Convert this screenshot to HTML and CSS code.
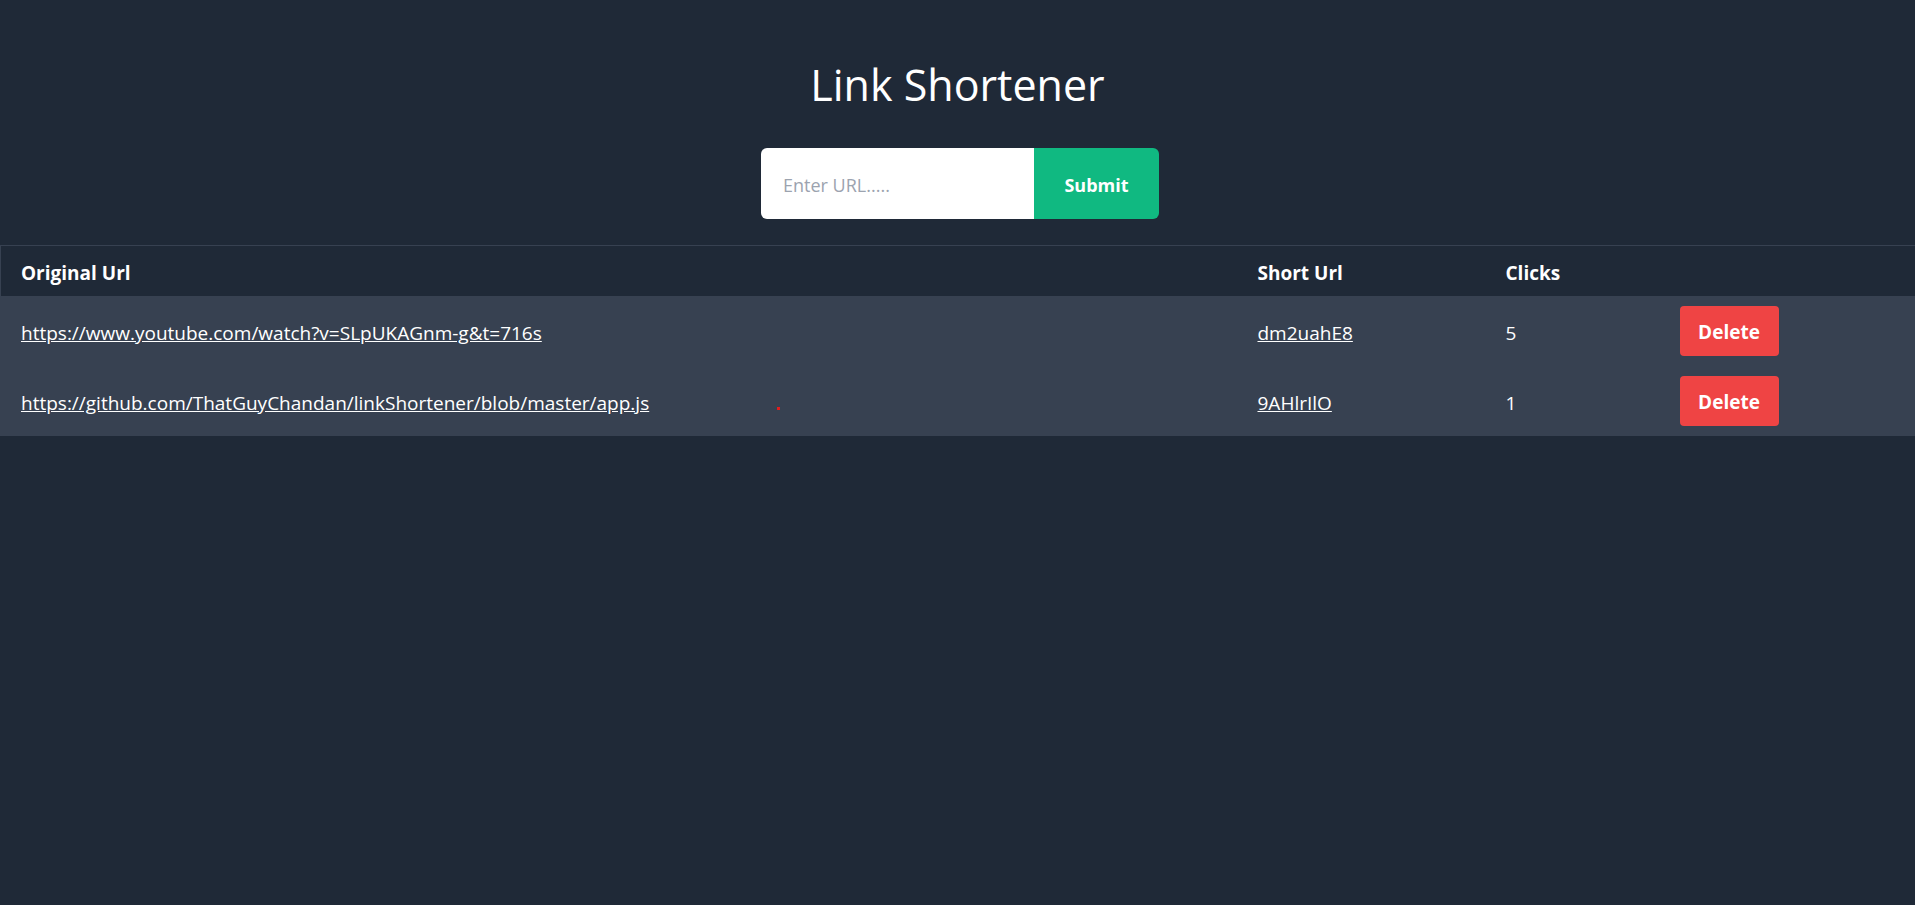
FILE: index.html
```html
<!DOCTYPE html>
<html lang="en">
<head>
<meta charset="utf-8">
<title>Link Shortener</title>
<link rel="stylesheet" href="styles.css">
</head>
<body>
<h1 class="title">Link Shortener</h1>
<form class="form">
  <input class="url-input" type="text" placeholder="Enter URL.....">
  <button class="submit" type="button">Submit</button>
</form>
<table class="links">
  <colgroup>
    <col class="col-orig">
    <col class="col-short">
    <col class="col-clicks">
    <col class="col-act">
  </colgroup>
  <thead>
    <tr>
      <th>Original Url</th>
      <th>Short Url</th>
      <th>Clicks</th>
      <th></th>
    </tr>
  </thead>
  <tbody>
    <tr>
      <td><a href="#">https://www.youtube.com/watch?v=SLpUKAGnm-g&amp;t=716s</a></td>
      <td><a href="#">dm2uahE8</a></td>
      <td>5</td>
      <td class="action-cell"><button class="delete" type="button">Delete</button></td>
    </tr>
    <tr>
      <td class="cell-rel"><a href="#">https://github.com/ThatGuyChandan/linkShortener/blob/master/app.js</a><span class="dot"></span></td>
      <td><a href="#">9AHlrIlO</a></td>
      <td>1</td>
      <td class="action-cell"><button class="delete" type="button">Delete</button></td>
    </tr>
  </tbody>
</table>
</body>
</html>
```
FILE: styles.css
```css
html, body {
  margin: 0;
  padding: 0;
  background: #1f2937;
  color: #ffffff;
  font-family: "Open Sans", "Noto Sans", sans-serif;
}
body {
  min-height: 905px;
}
.title {
  margin: 61px 0 0;
  font-size: 43px;
  line-height: 48px;
  font-weight: 400;
  text-align: center;
}
.form {
  display: flex;
  justify-content: center;
  margin: 39px 0 0;
  padding-left: 5px;
}
.url-input {
  width: 273px;
  height: 71px;
  box-sizing: border-box;
  padding: 2px 22px 0;
  border: none;
  border-radius: 6px 0 0 6px;
  font-family: inherit;
  font-size: 18px;
  color: #111827;
  background: #fff;
  outline: none;
}
.url-input::placeholder {
  color: #9ca3af;
}
.submit {
  width: 125px;
  height: 71px;
  padding: 2px 0 0;
  border: none;
  border-radius: 0 6px 6px 0;
  background: #10b981;
  color: #fff;
  font-family: inherit;
  font-size: 18px;
  font-weight: 700;
}
.links {
  width: 100%;
  table-layout: fixed;
  margin-top: 26px;
  border-collapse: collapse;
  border-top: 1px solid #374151;
  border-left: 1px solid #374151;
  font-size: 19px;
}
.col-orig { width: 1237px; }
.col-short { width: 248px; }
.col-clicks { width: 174px; }
.links thead tr {
  height: 50px;
}
.links tbody tr {
  height: 70px;
}
.links th {
  padding: 4px 20px 0;
  text-align: left;
  font-weight: 700;
  background: #1f2937;
}
.links td {
  padding: 4px 20px 0;
  background: #374151;
  white-space: nowrap;
}
.links td.action-cell {
  padding: 0 20px;
}
.links a {
  color: #fff;
  text-decoration: underline;
}
.delete {
  width: 99px;
  height: 50px;
  padding: 2px 0 0;
  border: none;
  border-radius: 4px;
  background: #ef4444;
  color: #fff;
  font-family: inherit;
  font-size: 19px;
  font-weight: 700;
  vertical-align: middle;
}
.cell-rel {
  position: relative;
}
.dot {
  position: absolute;
  left: 776px;
  top: 41px;
  width: 3px;
  height: 3px;
  background: #e11d1d;
}
```
